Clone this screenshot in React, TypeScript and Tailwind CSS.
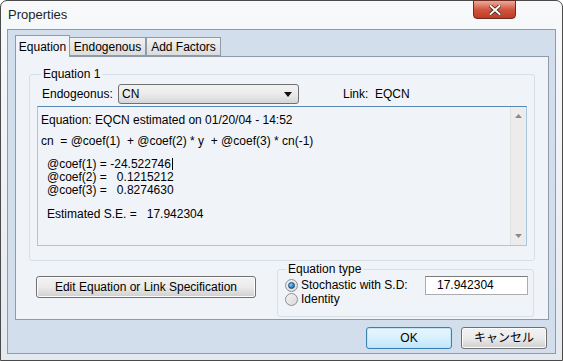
import React from 'react';

const ui = { fontFamily: '"Liberation Sans", "Noto Sans CJK JP", sans-serif' };

function Radio({ checked }: { checked?: boolean }) {
  return (
    <span className="flex h-[13px] w-[13px] shrink-0 items-center justify-center rounded-full border border-[#8e8f8f] bg-gradient-to-br from-[#f4f4f4] to-[#d8d8d8]">
      {checked && (
        <span className="h-[7px] w-[7px] rounded-full border border-[#1b4f7a] bg-[radial-gradient(circle_at_35%_35%,#8fd0ff,#1e6fb8_70%)]" />
      )}
    </span>
  );
}

function Button({ label, primary, className = '' }: { label: string; primary?: boolean; className?: string }) {
  return (
    <div
      className={`flex items-center justify-center rounded-[3px] border text-[12px] text-black ${
        primary
          ? 'border-[#3c7fb1] bg-gradient-to-b from-[#eaf6fd] via-[#d9f0fc] to-[#bee6fd] shadow-[inset_0_0_0_1px_#bfe4f9]'
          : 'border-[#707070] bg-gradient-to-b from-[#f2f2f2] via-[#ebebeb] to-[#cfcfcf] shadow-[inset_0_0_0_1px_#fcfcfc]'
      } ${className}`}
    >
      {label}
    </div>
  );
}

export default function App() {
  return (
    <div className="h-[361px] w-[563px] overflow-hidden bg-white" style={ui}>
      <div className="relative flex h-[361px] w-[563px] flex-col rounded-t-[7px] border border-[#4a4a4a] bg-gradient-to-b from-[#f7f9fb] via-[#eef2f6] to-[#e4e9ef] px-[6px] pb-[6px]">
        {/* Title bar */}
        <div className="flex h-[28px] items-center pl-[1px] text-[13px] text-[#1e1e1e]">Properties</div>
        <div className="absolute right-[46px] top-[-1px] flex h-[19px] w-[43px] items-center justify-center rounded-b-[4px] border border-[#6b2a22] bg-gradient-to-b from-[#e9a99c] via-[#d2553f] to-[#c13a22]">
          <svg width="12" height="10" viewBox="0 0 12 10">
            <path d="M1.5 1 L10.5 9 M10.5 1 L1.5 9" stroke="#3a1510" strokeWidth="3.4" strokeLinecap="square" />
            <path d="M1.5 1 L10.5 9 M10.5 1 L1.5 9" stroke="#ffffff" strokeWidth="2" strokeLinecap="square" />
          </svg>
        </div>

        {/* Client area */}
        <div className="flex flex-1 flex-col border border-[#8c9bb0] bg-[#d3deec] px-[7px] pt-[6px]">
          {/* Tabs */}
          <div className="relative z-10 flex h-[20px] items-end text-[12px]">
            <div className="mb-[-1px] flex h-[22px] w-[55px] items-center justify-center border border-b-0 border-[#8e9bab] bg-[#f0f4f9] text-black">
              Equation
            </div>
            <div className="flex h-[19px] w-[76px] items-center justify-center border border-l-0 border-[#8e9bab] bg-gradient-to-b from-[#f2f2f2] to-[#dcdcdc]">
              Endogenous
            </div>
            <div className="flex h-[19px] w-[75px] items-center justify-center border border-l-[#8e9bab] border-[#8e9bab] bg-gradient-to-b from-[#f2f2f2] to-[#dcdcdc]">
              Add Factors
            </div>
          </div>

          {/* Tab panel */}
          <div className="flex h-[264px] w-[534px] flex-col border border-[#8e9bab] bg-[#f0f4f9] px-[13px] pt-[11px] text-[12px] text-black">
            <fieldset className="h-[193px] rounded-[3px] border border-[#d5dfe5] px-[7px] pt-[2px]">
              <legend className="ml-[4px] px-[2px] leading-[13px]">Equation 1</legend>
              <div className="flex h-[22px] items-center">
                <span className="ml-[5px] w-[76px]">Endogeonus:</span>
                <div className="flex h-[20px] w-[181px] items-center justify-between rounded-[3px] border border-[#707070] bg-gradient-to-b from-[#f2f2f2] via-[#ebebeb] to-[#d6d6d6] pl-[3px] pr-[6px]">
                  <span>CN</span>
                  <svg width="8" height="5" viewBox="0 0 8 5">
                    <path d="M0 0 H8 L4 5 Z" fill="#111" />
                  </svg>
                </div>
                <span className="ml-[44px]">Link:&nbsp; EQCN</span>
              </div>

              {/* Equation text */}
              <div className="mt-[1px] flex h-[140px] border border-[#abc7de] border-t-[#5a86b4] bg-[#f0f4f9]">
                <div className="flex-1 pl-[3px] pt-[7px] leading-[13px]">
                  <div>Equation: EQCN estimated on 01/20/04 - 14:52</div>
                  <div className="mt-[8px] whitespace-pre">cn  = @coef(1)  + @coef(2) * y  + @coef(3) * cn(-1)</div>
                  <div className="mt-[8px] whitespace-pre pl-[6px]">
                    @coef(1) = -24.522746<span className="ml-[1px] inline-block h-[12px] w-[1px] translate-y-[2px] bg-black" />
                  </div>
                  <div className="whitespace-pre pl-[6px]">@coef(2) =   0.1215212</div>
                  <div className="whitespace-pre pl-[6px]">@coef(3) =   0.8274630</div>
                  <div className="mt-[11px] whitespace-pre pl-[6px]">Estimated S.E. =   17.942304</div>
                </div>
                <div className="flex w-[16px] flex-col items-center justify-between border-l border-[#e2e2e2] bg-[#ececec] py-[7px]">
                  <svg width="7" height="4" viewBox="0 0 7 4">
                    <path d="M0 4 H7 L3.5 0 Z" fill="#8a8a8a" />
                  </svg>
                  <svg width="7" height="4" viewBox="0 0 7 4">
                    <path d="M0 0 H7 L3.5 4 Z" fill="#8a8a8a" />
                  </svg>
                </div>
              </div>
            </fieldset>

            <div className="mt-[2px] flex items-start">
              <Button label="Edit Equation or Link Specification" className="ml-[7px] mt-[13px] h-[22px] w-[220px]" />
              <fieldset className="ml-[21px] h-[54px] w-[257px] rounded-[3px] border border-[#d5dfe5] pl-[7px] pr-[5px]">
                <legend className="ml-[1px] px-[2px] leading-[13px]">Equation type</legend>
                <div className="flex h-[18px] items-center justify-between">
                  <div className="flex items-center whitespace-nowrap">
                    <Radio checked />
                    <span className="ml-[3px]">Stochastic with S.D:</span>
                  </div>
                  <div className="flex h-[19px] w-[103px] shrink-0 items-center border border-[#abadb3] border-t-[#7a7a7a] bg-white pl-[11px]">
                    17.942304
                  </div>
                </div>
                <div className="mt-[-2px] flex h-[14px] items-center">
                  <Radio />
                  <span className="ml-[3px]">Identity</span>
                </div>
              </fieldset>
            </div>
          </div>

          {/* Dialog buttons */}
          <div className="mt-[7px] flex justify-end gap-[9px] pr-[1px]">
            <Button label="OK" primary className="h-[22px] w-[86px]" />
            <Button label="キャンセル" className="h-[22px] w-[86px]" />
          </div>
        </div>
      </div>
    </div>
  );
}
